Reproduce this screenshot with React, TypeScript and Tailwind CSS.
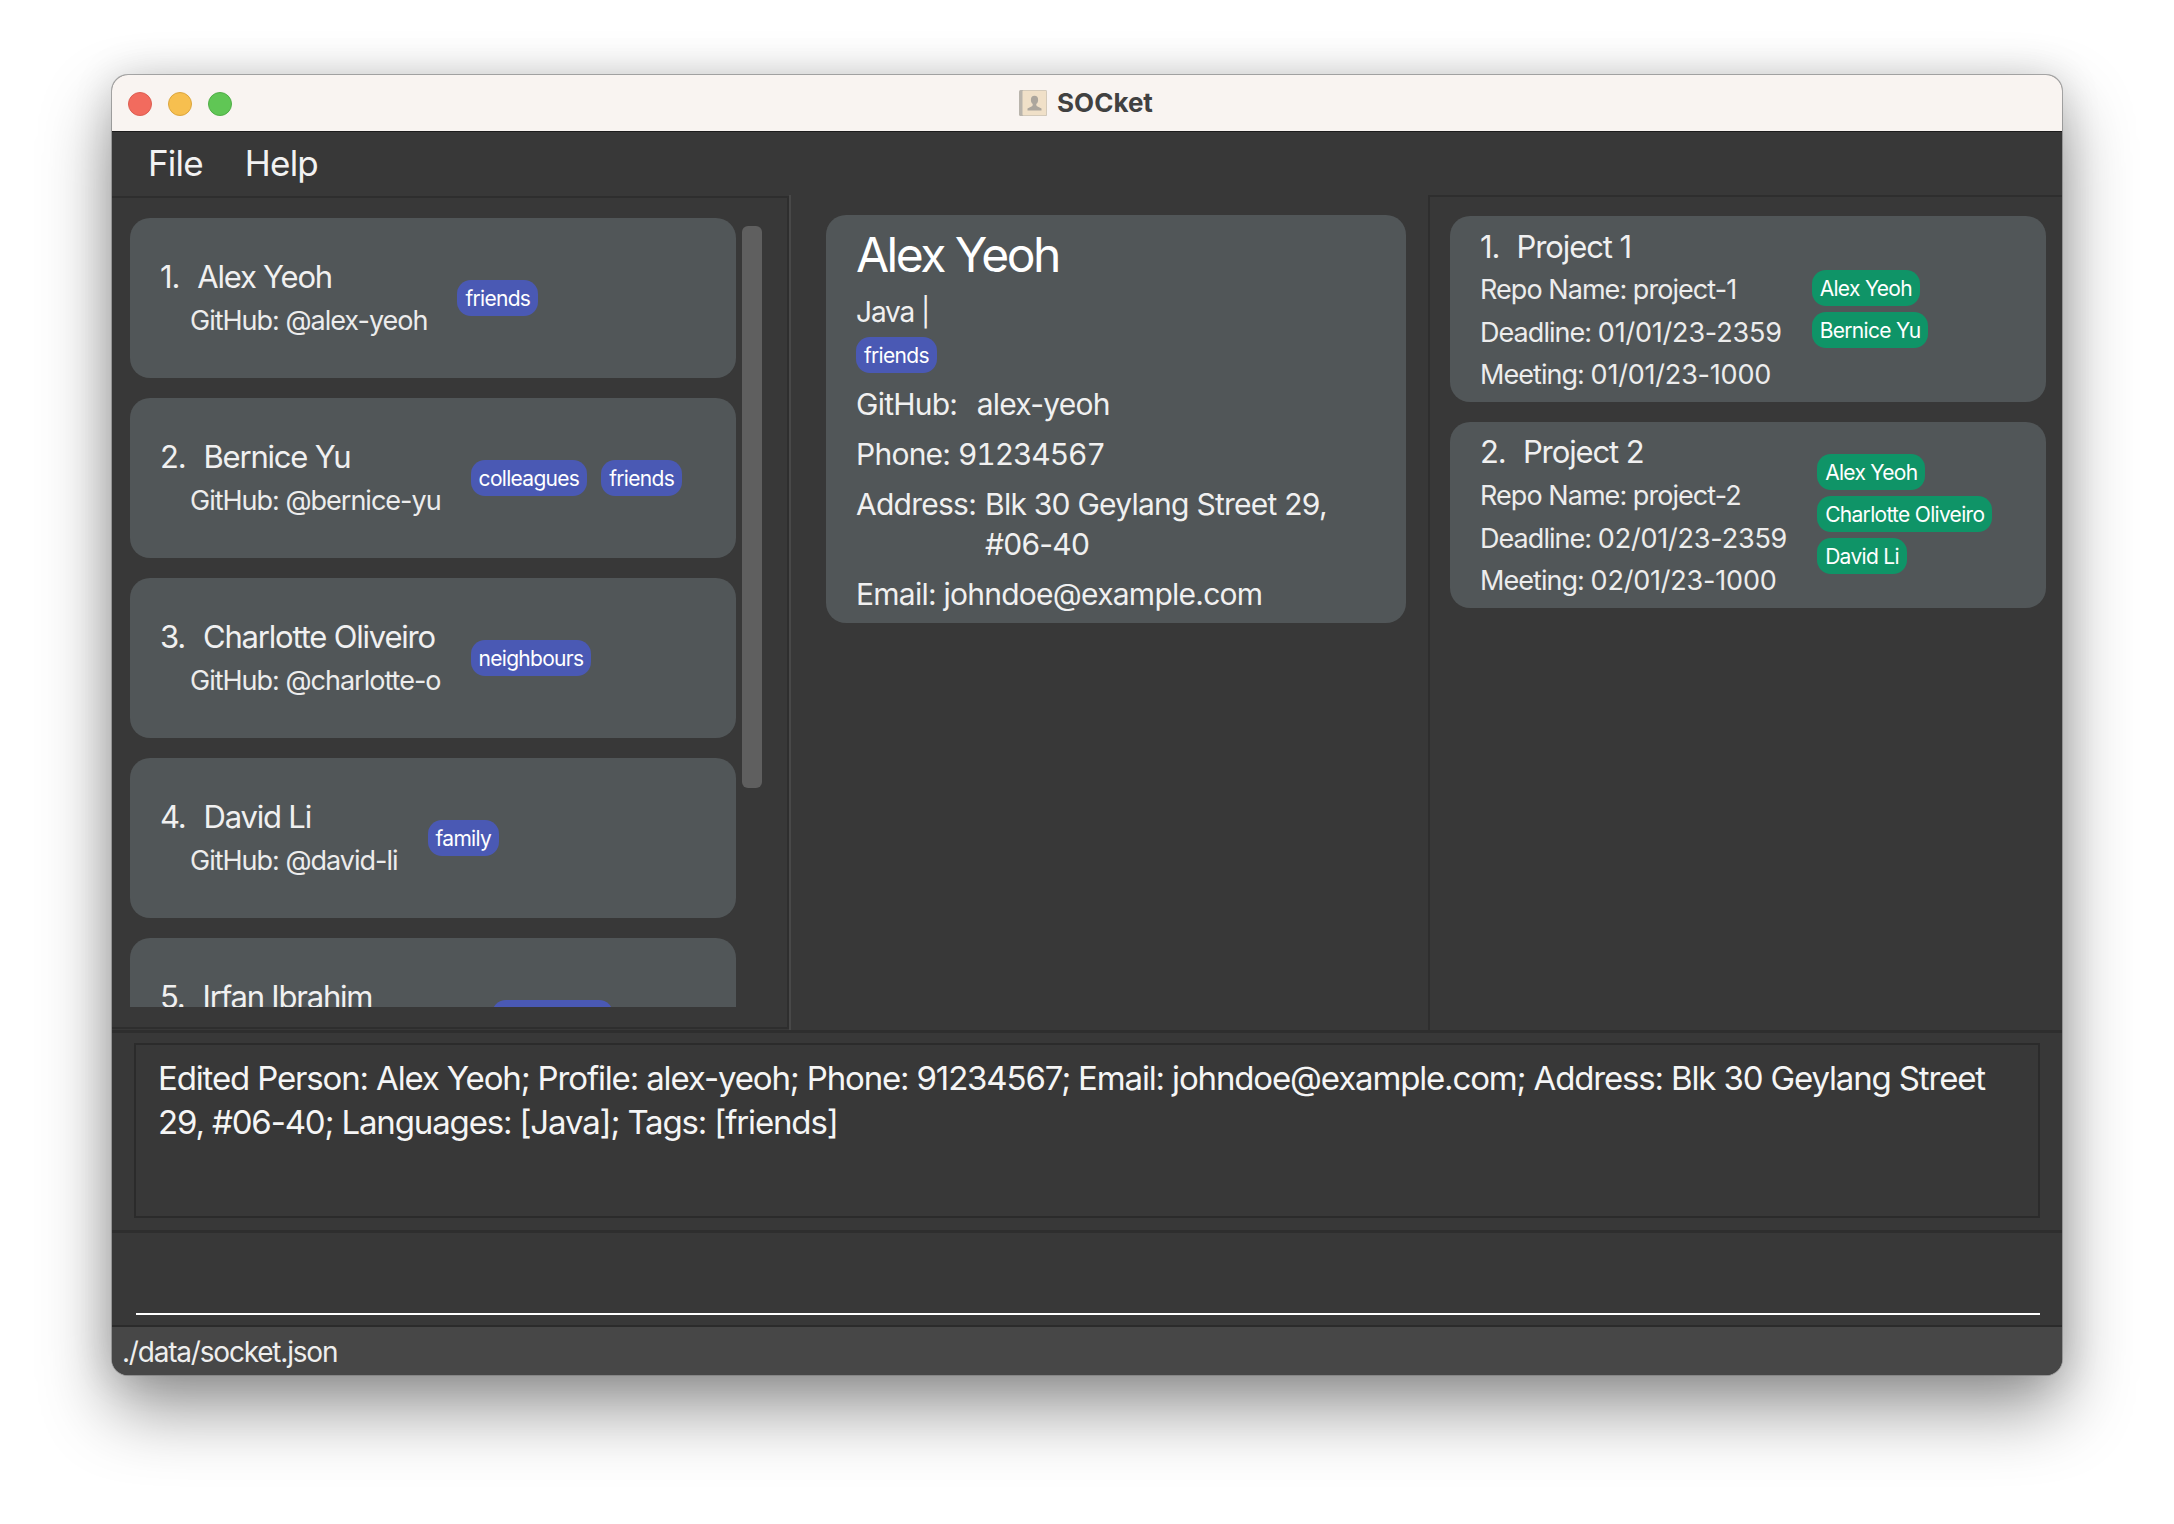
const font = { fontFamily: "Inter, 'Noto Sans', sans-serif" };

function Tag({ children, green }: { children: string; green?: boolean }) {
  return (
    <span className={`inline-flex h-[36px] items-center rounded-[14px] px-[8px] text-[21px] leading-none tracking-[-0.7px] text-white whitespace-nowrap ${green ? "bg-[#0f9467]" : "bg-[#4a59b4]"}`}>
      {children}
    </span>
  );
}

function PersonCard({ n, name, gh, tags }: { n: number; name: string; gh: string; tags: string[] }) {
  return (
    <div className="flex h-[160px] w-[606px] shrink-0 items-center gap-[30px] rounded-[20px] bg-[#515658] pl-[30px]">
      <div className="flex flex-col">
        <div className="text-[31px] leading-[44px] tracking-[-1.2px] text-[#f0f0f0] whitespace-pre">{n}.  <span className="ml-[3px]">{name}</span></div>
        <div className="ml-[30px] text-[27px] leading-[43px] tracking-[-1px] text-[#ececec] whitespace-pre">GitHub: @{gh}</div>
      </div>
      <div className="flex gap-[14px]">
        {tags.map((t) => <Tag key={t}>{t}</Tag>)}
      </div>
    </div>
  );
}

function ProjectCard({ n, repo, dl, meet, tags, pt, tagPt, mt }: { n: number; repo: string; dl: string; meet: string; tags: string[]; pt: string; tagPt: string; mt: string }) {
  const line = "text-[27px] leading-[42.5px] tracking-[-0.95px] text-[#ececec] whitespace-pre";
  return (
    <div className={`flex h-[186px] w-[596px] shrink-0 gap-[30px] rounded-[20px] bg-[#515658] pl-[30px] ${pt}`}>
      <div className="flex flex-col">
        <div className={`text-[31px] leading-[42px] tracking-[-1.1px] text-[#f0f0f0] whitespace-pre ${mt}`}>{n}.  <span className="ml-[2px]">Project {n}</span></div>
        <div className={line}>Repo Name: {repo}</div>
        <div className={line}>Deadline: <span className="tracking-[-0.2px]">{dl}</span></div>
        <div className={line}>Meeting: <span className="tracking-[-0.2px]">{meet}</span></div>
      </div>
      <div className={`flex flex-col items-start gap-[6px] ${tagPt}`}>
        {tags.map((t) => <Tag key={t} green>{t}</Tag>)}
      </div>
    </div>
  );
}

function BookIcon() {
  return (
    <svg width="28" height="26" viewBox="0 0 28 26">
      <rect x="0" y="0" width="28" height="26" rx="1.5" fill="#b9b4ac" />
      <rect x="3.5" y="0.5" width="24" height="25" rx="1" fill="#f0e0c8" />
      <ellipse cx="15.5" cy="10" rx="3.6" ry="4.2" fill="#aca69d" />
      <path d="M14 13 L17 13 L17.6 16 L22.5 18.5 L22.5 20.5 L8.5 20.5 L8.5 18.5 L13.4 16 Z" fill="#aca69d" />
    </svg>
  );
}

export default function App() {
  const detail = "text-[30px] leading-[40px] tracking-[-0.75px] text-[#f0f0f0]";
  return (
    <div className="min-h-[1524px] bg-white pt-[75px]" style={font}>
      <div className="mx-auto flex h-[1300px] w-[1950px] flex-col overflow-hidden rounded-[16px] bg-[#383838] shadow-[0_0_0_1px_rgba(120,120,120,0.6),0_34px_70px_rgba(0,0,0,0.42),0_0_40px_rgba(0,0,0,0.14)]">
        {/* title bar */}
        <div className="relative flex h-[57px] shrink-0 items-center justify-center border-b border-[#1c1c1c] bg-[#f9f4f1]">
          <div className="absolute left-[16px] top-[17px] flex gap-[16px]">
            <span className="h-[24px] w-[24px] rounded-full border border-[#dd5e52] bg-[#f26b5e]" />
            <span className="h-[24px] w-[24px] rounded-full border border-[#dca63e] bg-[#f7bf4f]" />
            <span className="h-[24px] w-[24px] rounded-full border border-[#50ae47] bg-[#60c655]" />
          </div>
          <div className="flex items-center gap-[10px] pr-[2px]">
            <BookIcon />
            <span className="text-[26px] font-bold leading-none text-[#414141]">SOCket</span>
          </div>
        </div>
        {/* menu */}
        <div className="flex h-[63px] shrink-0 items-center gap-[42px] pb-[1px] pl-[36px] text-[35px] leading-none tracking-[-0.8px] text-[#f2f2f2]">
          <span>File</span>
          <span>Help</span>
        </div>
        {/* main */}
        <div className="flex h-[835px] shrink-0">
          <div className="mt-[1px] flex h-[833px] w-[677px] shrink-0 gap-[6px] border-y-2 border-r-2 border-[#2e2e2e] pl-[18px] pt-[20px]">
            <div className="flex h-[789px] flex-col gap-[20px] overflow-hidden">
              <PersonCard n={1} name="Alex Yeoh" gh="alex-yeoh" tags={["friends"]} />
              <PersonCard n={2} name="Bernice Yu" gh="bernice-yu" tags={["colleagues", "friends"]} />
              <PersonCard n={3} name="Charlotte Oliveiro" gh="charlotte-o" tags={["neighbours"]} />
              <PersonCard n={4} name="David Li" gh="david-li" tags={["family"]} />
              <PersonCard n={5} name="Irfan Ibrahim" gh="irfan-ibrahim" tags={["classmates"]} />
            </div>
            <div className="mt-[8px] h-[562px] w-[20px] rounded-[6px] bg-[#5f5f5f]" />
          </div>
          <div className="w-[639px] shrink-0 border-l-2 border-[#484848] pl-[35px] pt-[20px]">
            <div className="flex h-[408px] w-[580px] flex-col rounded-[20px] bg-[#515658] pl-[30px]">
              <div className="mt-[8px] text-[48px] leading-[64px] tracking-[-2.5px] text-white">Alex Yeoh</div>
              <div className="mt-[5px] text-[28px] leading-[40px] tracking-[-1.1px] text-[#f0f0f0]">Java |</div>
              <div className="mt-[5px] flex"><Tag>friends</Tag></div>
              <div className={`mt-[11px] whitespace-pre ${detail}`}>GitHub:  <span className="ml-[4px]">alex-yeoh</span></div>
              <div className={`mt-[10px] ${detail}`}>Phone: <span className="tabular-nums tracking-[-1.1px]">91234567</span></div>
              <div className={`mt-[10px] flex ${detail}`}>
                <span className="w-[129px] shrink-0">Address:</span>
                <span>Blk 30 Geylang Street 29,<br />#06-40</span>
              </div>
              <div className={`mt-[10px] ${detail}`}>Email: johndoe@example.com</div>
            </div>
          </div>
          <div className="flex flex-1 flex-col gap-[20px] border-l-2 border-t-2 border-[#2e2e2e] pl-[20px] pt-[19px]">
            <ProjectCard n={1} repo="project-1" dl="01/01/23-2359" meet="01/01/23-1000" tags={["Alex Yeoh", "Bernice Yu"]} pt="pt-[10px]" tagPt="pt-[44px]" mt="mb-[1px]" />
            <ProjectCard n={2} repo="project-2" dl="02/01/23-2359" meet="02/01/23-1000" tags={["Alex Yeoh", "Charlotte Oliveiro", "David Li"]} pt="pt-[9px]" tagPt="pt-[23px]" mt="mb-[2px]" />
          </div>
        </div>
        {/* result */}
        <div className="h-[203px] shrink-0 border-y-[3px] border-[#2e2e2e] px-[22px] pt-[10px]">
          <div className="h-[175px] w-[1906px] border-2 border-[#2b2b2b] pl-[22px] pt-[11px] text-[33px] leading-[44px] tracking-[-1.15px] text-[#f5f5f5]">
            Edited Person: Alex Yeoh; Profile: alex-yeoh; Phone: 91234567; Email: johndoe@example.com; Address: Blk 30 Geylang Street<br />
            29, #06-40; Languages: [Java]; Tags: [friends]
          </div>
        </div>
        {/* command */}
        <div className="flex h-[94px] shrink-0 items-end border-b-2 border-[#2b2b2b] pb-[10px] pl-[24px]">
          <div className="h-[2px] w-[1904px] shrink-0 bg-white" />
        </div>
        {/* status */}
        <div className="flex-1 bg-[#474747] pl-[10px] pt-[5px] text-[28px] leading-[40px] tracking-[-1.2px] text-[#eeeeee]">./data/socket.json</div>
      </div>
    </div>
  );
}
